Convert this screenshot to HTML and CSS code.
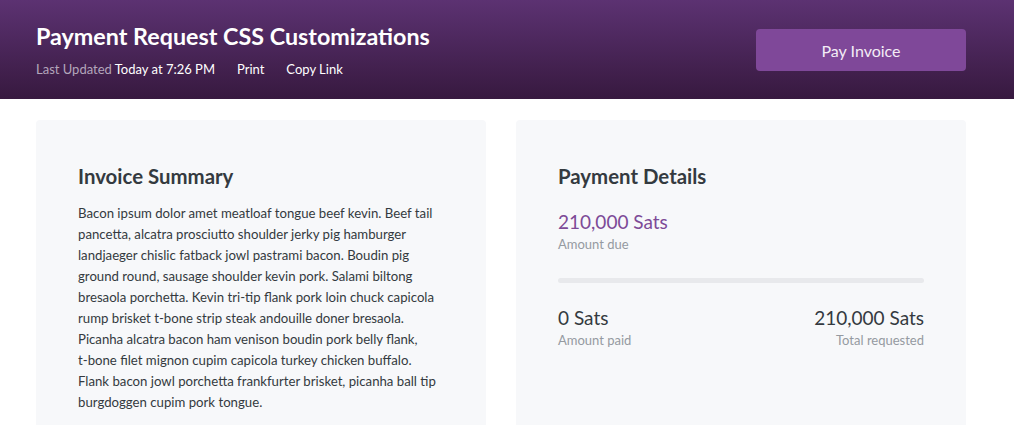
FILE: index.html
```html
<!DOCTYPE html>
<html lang="en">
<head>
<meta charset="utf-8">
<title>Payment Request CSS Customizations</title>
<link rel="stylesheet" href="styles.css">
</head>
<body>
<header class="topbar">
  <div class="wrap topbar-inner">
    <div class="title-block">
      <h1 class="page-title">Payment Request CSS Customizations</h1>
      <div class="meta">
        <span class="meta-item"><span class="muted">Last Updated</span> Today at 7:26 PM</span>
        <a class="meta-link" href="#">Print</a>
        <a class="meta-link" href="#">Copy Link</a>
      </div>
    </div>
    <button class="pay-btn" type="button">Pay Invoice</button>
  </div>
</header>
<main class="wrap cards">
  <section class="card">
    <h2 class="card-title">Invoice Summary</h2>
    <p class="summary">Bacon ipsum dolor amet meatloaf tongue beef kevin. Beef tail pancetta, alcatra prosciutto shoulder jerky pig hamburger landjaeger chislic fatback jowl pastrami bacon. Boudin pig ground round, sausage shoulder kevin pork. Salami biltong bresaola porchetta. Kevin tri-tip flank pork loin chuck capicola rump brisket <span class="nowrap">t-bone</span> strip steak andouille doner bresaola. Picanha alcatra bacon ham venison boudin pork belly flank, <span class="nowrap">t-bone</span> filet mignon cupim capicola turkey chicken buffalo. Flank bacon jowl porchetta frankfurter brisket, picanha ball tip burgdoggen cupim pork tongue.</p>
  </section>
  <section class="card">
    <h2 class="card-title">Payment Details</h2>
    <div class="due">
      <div class="amount amount-due">210,000 Sats</div>
      <div class="label">Amount due</div>
    </div>
    <div class="progress"><div class="progress-fill" style="width:0%"></div></div>
    <div class="totals">
      <div class="total">
        <div class="amount">0 Sats</div>
        <div class="label">Amount paid</div>
      </div>
      <div class="total total-right">
        <div class="amount">210,000 Sats</div>
        <div class="label">Total requested</div>
      </div>
    </div>
  </section>
</main>
</body>
</html>
```
FILE: styles.css
```css
* { box-sizing: border-box; }
body {
  margin: 0;
  background: #ffffff;
  font-family: Lato, "Open Sans", "Liberation Sans", sans-serif;
  color: #343a40;
}
.wrap {
  width: 930px;
  margin-left: 36px;
}
.topbar {
  height: 99px;
  background: linear-gradient(to bottom, #5c3272 0%, #37193f 100%);
}
.topbar-inner {
  display: flex;
  justify-content: space-between;
  align-items: flex-start;
}
.title-block {
  padding-top: 21px;
}
.page-title {
  margin: 0;
  font-size: 23.3px;
  line-height: 30px;
  font-weight: 700;
  color: #ffffff;
}
.meta {
  display: flex;
  gap: 22px;
  margin-top: 10px;
  font-size: 13px;
  line-height: 16px;
  color: #ffffff;
}
.muted { color: #b3a6bb; }
.meta-link {
  color: #ffffff;
  text-decoration: none;
}
.pay-btn {
  margin-top: 29px;
  width: 210px;
  height: 42px;
  border: 0;
  border-radius: 4px;
  background: #7f4899;
  color: #f3ecf6;
  font-family: inherit;
  font-size: 16px;
}
.cards {
  display: flex;
  gap: 30px;
  margin-top: 21px;
}
.card {
  flex: 1;
  background: #f7f8fa;
  border-radius: 4px;
  padding: 42px 42px 20px;
  height: 320px;
}
.card-title {
  margin: 0;
  font-size: 20.4px;
  line-height: 28px;
  font-weight: 700;
  color: #343a40;
}
.summary {
  margin: 13px 0 0;
  font-size: 13.2px;
  line-height: 21px;
  color: #343a40;
}
.nowrap { white-space: nowrap; }
.due { margin-top: 19px; }
.amount {
  font-size: 19px;
  line-height: 26px;
  color: #343a40;
}
.amount-due { color: #7d4a97; }
.label {
  font-size: 13px;
  line-height: 18px;
  color: #959aa1;
}
.progress {
  margin-top: 25px;
  height: 5px;
  border-radius: 3px;
  background: #e8e9ec;
  overflow: hidden;
}
.progress-fill {
  height: 100%;
  background: #7f4899;
}
.totals {
  display: flex;
  justify-content: space-between;
  margin-top: 22px;
}
.total-right { text-align: right; }
```
